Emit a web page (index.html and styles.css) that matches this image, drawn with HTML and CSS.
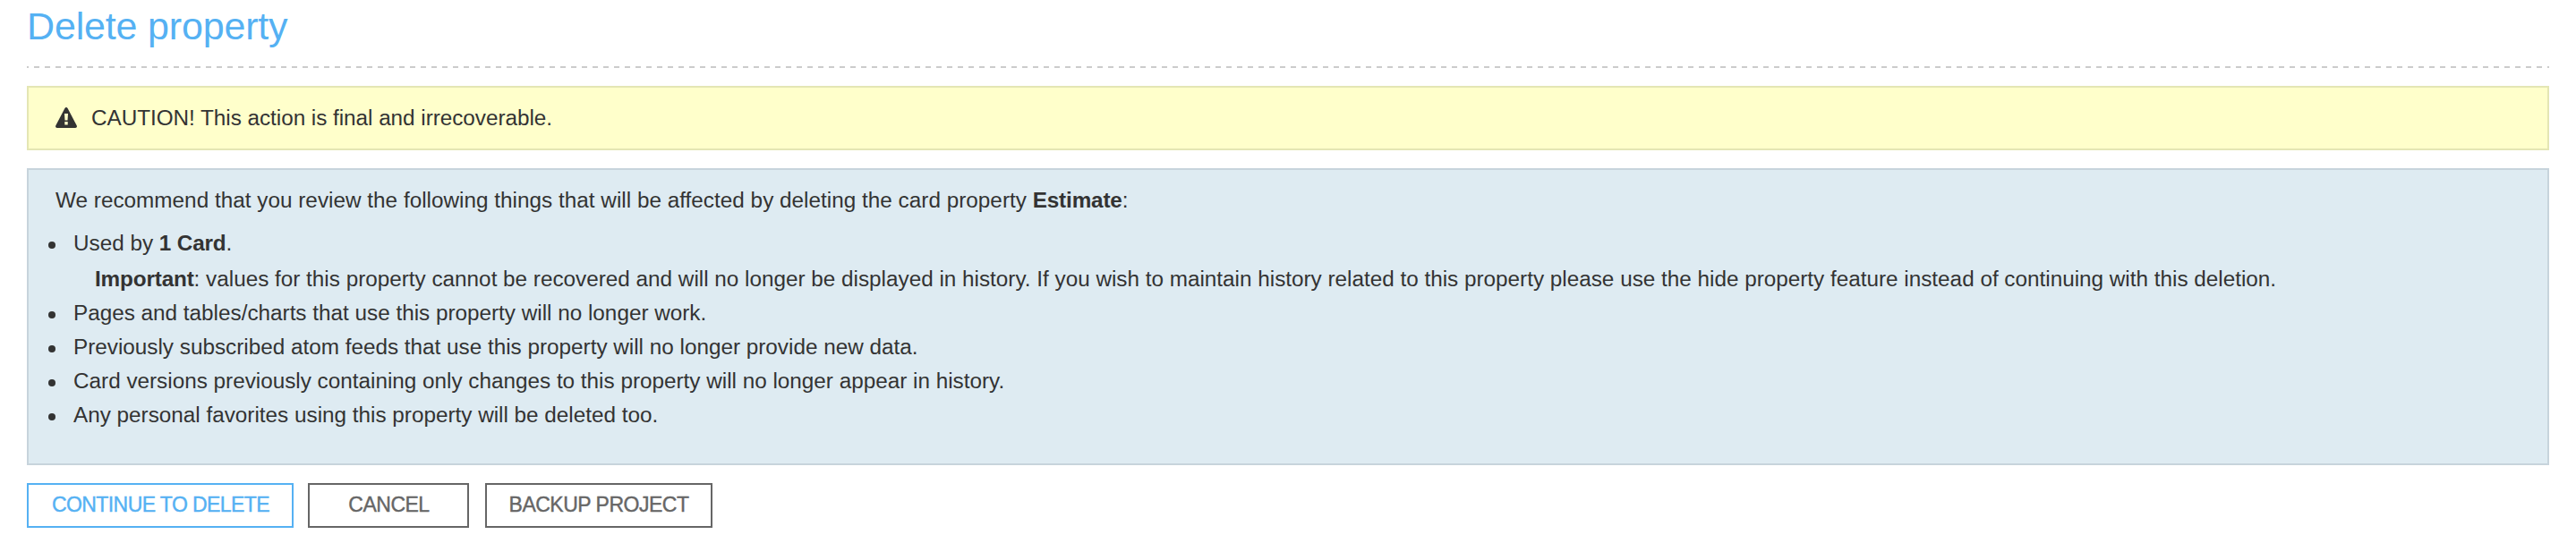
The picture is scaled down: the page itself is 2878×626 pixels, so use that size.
FILE: index.html
```
<!DOCTYPE html>
<html lang="en">
<head>
<meta charset="utf-8">
<title>Delete property</title>
<link rel="stylesheet" href="styles.css">
</head>
<body>
<main class="page">
  <h1 class="title">Delete property</h1>
  <div class="divider"></div>
  <div class="box warning">
    <svg class="warning-icon" viewBox="0 0 24 23"><path fill="#333" fill-rule="evenodd" d="M12 0Q13 0 13.7 1.3L23.8 20.5Q24.5 22.8 22.2 23H1.8Q-.5 22.8.2 20.5L10.3 1.3Q11 0 12 0ZM10 7L10.5 14.5H13.5L14 7ZM10.3 16V19.5H13.7V16Z"/></svg>
    <span class="caution">CAUTION! This action is final and irrecoverable.</span>
  </div>
  <section class="box info">
    <p class="intro">We recommend that you review the following things that will be affected by deleting the card property <b>Estimate</b>:</p>
    <ul class="effects">
      <li class="used"><span>Used by <b>1 Card</b>.</span></li>
      <li class="note"><span><b>Important</b>: values for this property cannot be recovered and will no longer be displayed in history. If you wish to maintain history related to this property please use the hide property feature instead of continuing with this deletion.</span></li>
      <li><span>Pages and tables/charts that use this property will no longer work.</span></li>
      <li><span>Previously subscribed atom feeds that use this property will no longer provide new data.</span></li>
      <li><span>Card versions previously containing only changes to this property will no longer appear in history.</span></li>
      <li><span>Any personal favorites using this property will be deleted too.</span></li>
    </ul>
  </section>
  <div class="actions">
    <button class="button primary">CONTINUE TO DELETE</button>
    <button class="button cancel">CANCEL</button>
    <button class="button backup">BACKUP PROJECT</button>
  </div>
</main>
</body>
</html>
```
FILE: styles.css
```
* { box-sizing: border-box; }
body { margin: 0; background: #fff; color: #333; font: 24.29px/38px "Liberation Sans", Arial, sans-serif; }
b { letter-spacing: -.15px; }
.page { padding: 0 30px; }
.title { margin: 0; height: 74px; padding-top: 4px; color: #55b1f3; font-size: 43px; line-height: 50px; font-weight: 400; letter-spacing: -.17px; }
.divider { height: 2px; background: repeating-linear-gradient(90deg, #ccc 0 2px, transparent 2px 8px, #ccc 8px 12px); }
.box { border: 2px solid; }
.warning { display: flex; align-items: center; gap: 16px; height: 72px; margin-top: 20px; padding: 0 30px; background: #ffffcb; border-color: #e4e6b4; }
.warning-icon { width: 24px; height: 23px; margin-bottom: 2px; }
.caution { letter-spacing: -.03px; }
.info { height: 332px; margin-top: 20px; padding: 15px 30px; background: #deebf2; border-color: #c7d4dc; }
.intro { margin: 0 0 10px; letter-spacing: .02px; }
.effects { margin: 0; padding: 0 0 0 20px; list-style: none; }
.effects li { display: flex; height: 38px; }
.effects li::before { content: ""; width: 8px; height: 8px; margin: 17px 20px 0 -28px; border-radius: 50%; background: #333; }
.effects .used { height: 40px; }
.effects .note { padding-left: 24px; }
.effects .note::before { display: none; }
.actions { display: flex; margin-top: 20px; }
.button { height: 50px; margin: 0; padding: 0 0 1px; border: 2px solid #666; background: #fff; color: #666; font: 23px "Liberation Sans", Arial, sans-serif; letter-spacing: -.5px; -webkit-text-stroke: .4px currentColor; }
.primary { width: 298px; padding-left: 1px; border-color: #55b1f3; color: #55b1f3; letter-spacing: -.58px; }
.cancel { width: 180px; margin-left: 16px; padding-left: 1px; }
.backup { width: 254px; margin-left: 18px; }
```
